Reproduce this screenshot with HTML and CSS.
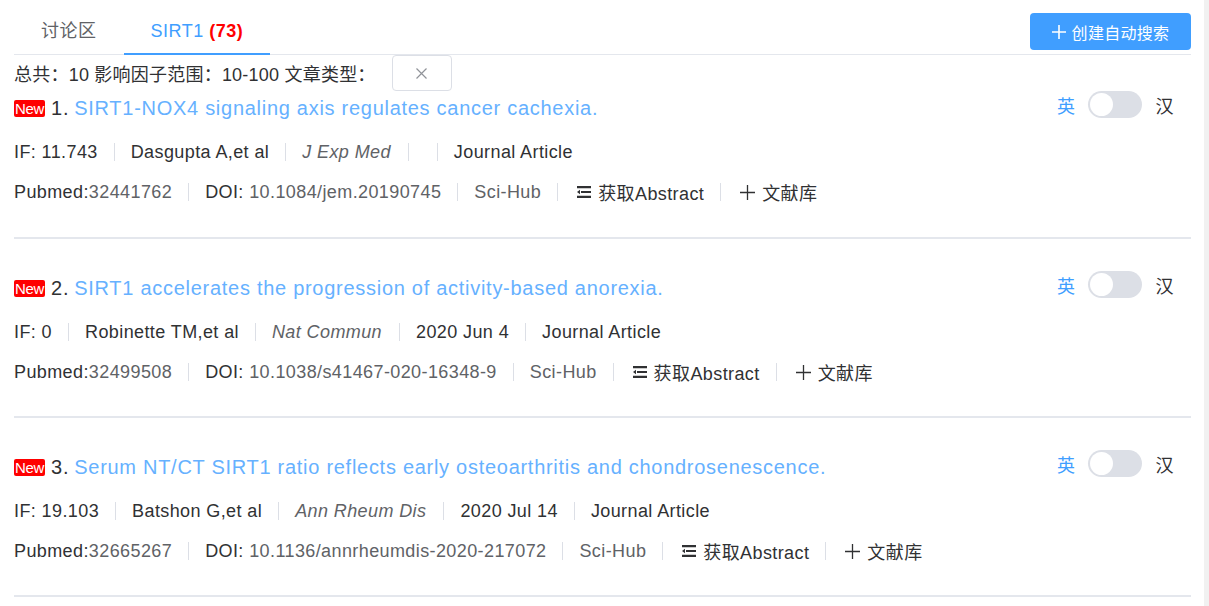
FILE: index.html
```html
<!DOCTYPE html>
<html lang="zh-CN">
<head>
    <meta charset="UTF-8">
    <meta name="viewport" content="width=device-width, initial-scale=1.0">
    <title>SIRT1 文献</title>
    <link rel="stylesheet" href="styles.css">
</head>
<body>
    <div class="page">
        <div class="header">
            <div class="tabs">
                <div class="tab">讨论区</div>
                <div class="tab active">SIRT1 <b class="count">(73)</b></div>
            </div>
            <button class="create-btn">
                <svg width="14" height="14" viewBox="0 0 14 14"><path d="M7 0v14M0 7h14" stroke="#fff" stroke-width="1.6"/></svg>
                创建自动搜索
            </button>
        </div>

        <div class="filter-row">
            <span class="filter-text">总共：10 影响因子范围：10-100 文章类型：</span>
            <span class="filter-box">
                <svg width="11" height="11" viewBox="0 0 11 11"><path d="M0.5 0.5l10 10M10.5 0.5l-10 10" stroke="#909399" stroke-width="1.2"/></svg>
            </span>
        </div>

        <div class="article first">
            <div class="title-row">
                <div class="title"><span class="badge">New</span><span class="num">1.</span><a class="title-link">SIRT1-NOX4 signaling axis regulates cancer cachexia.</a></div>
                <div class="lang-switch"><span class="lang-en">英</span><span class="toggle"><span class="knob"></span></span><span class="lang-zh">汉</span></div>
            </div>
            <div class="meta">
                <span>IF: 11.743</span><i class="sep"></i>
                <span>Dasgupta A,et al</span><i class="sep"></i>
                <span class="journal">J Exp Med</span><i class="sep"></i>
                <span class="empty"></span><i class="sep"></i>
                <span>Journal Article</span>
            </div>
            <div class="meta">
                <span>Pubmed:<span class="muted">32441762</span></span><i class="sep"></i>
                <span>DOI: <span class="muted">10.1084/jem.20190745</span></span><i class="sep"></i>
                <span class="muted">Sci-Hub</span><i class="sep"></i>
                <span class="action"><svg class="ico" width="14" height="12" viewBox="0 0 14 12"><path d="M0 0h14v2.2H0zM4 4.9h10v2.2H4zM0 9.8h14V12H0zM0 6l3-2.2v4.4z" fill="#303133"/></svg>获取Abstract</span><i class="sep"></i>
                <span class="action"><svg class="ico" width="15" height="15" viewBox="0 0 15 15"><path d="M7.5 0v15M0 7.5h15" stroke="#303133" stroke-width="1.3"/></svg>文献库</span>
            </div>
        </div>

        <div class="article">
            <div class="title-row">
                <div class="title"><span class="badge">New</span><span class="num">2.</span><a class="title-link">SIRT1 accelerates the progression of activity-based anorexia.</a></div>
                <div class="lang-switch"><span class="lang-en">英</span><span class="toggle"><span class="knob"></span></span><span class="lang-zh">汉</span></div>
            </div>
            <div class="meta">
                <span>IF: 0</span><i class="sep"></i>
                <span>Robinette TM,et al</span><i class="sep"></i>
                <span class="journal">Nat Commun</span><i class="sep"></i>
                <span>2020 Jun 4</span><i class="sep"></i>
                <span>Journal Article</span>
            </div>
            <div class="meta">
                <span>Pubmed:<span class="muted">32499508</span></span><i class="sep"></i>
                <span>DOI: <span class="muted">10.1038/s41467-020-16348-9</span></span><i class="sep"></i>
                <span class="muted">Sci-Hub</span><i class="sep"></i>
                <span class="action"><svg class="ico" width="14" height="12" viewBox="0 0 14 12"><path d="M0 0h14v2.2H0zM4 4.9h10v2.2H4zM0 9.8h14V12H0zM0 6l3-2.2v4.4z" fill="#303133"/></svg>获取Abstract</span><i class="sep"></i>
                <span class="action"><svg class="ico" width="15" height="15" viewBox="0 0 15 15"><path d="M7.5 0v15M0 7.5h15" stroke="#303133" stroke-width="1.3"/></svg>文献库</span>
            </div>
        </div>

        <div class="article">
            <div class="title-row">
                <div class="title"><span class="badge">New</span><span class="num">3.</span><a class="title-link">Serum NT/CT SIRT1 ratio reflects early osteoarthritis and chondrosenescence.</a></div>
                <div class="lang-switch"><span class="lang-en">英</span><span class="toggle"><span class="knob"></span></span><span class="lang-zh">汉</span></div>
            </div>
            <div class="meta">
                <span>IF: 19.103</span><i class="sep"></i>
                <span>Batshon G,et al</span><i class="sep"></i>
                <span class="journal">Ann Rheum Dis</span><i class="sep"></i>
                <span>2020 Jul 14</span><i class="sep"></i>
                <span>Journal Article</span>
            </div>
            <div class="meta">
                <span>Pubmed:<span class="muted">32665267</span></span><i class="sep"></i>
                <span>DOI: <span class="muted">10.1136/annrheumdis-2020-217072</span></span><i class="sep"></i>
                <span class="muted">Sci-Hub</span><i class="sep"></i>
                <span class="action"><svg class="ico" width="14" height="12" viewBox="0 0 14 12"><path d="M0 0h14v2.2H0zM4 4.9h10v2.2H4zM0 9.8h14V12H0zM0 6l3-2.2v4.4z" fill="#303133"/></svg>获取Abstract</span><i class="sep"></i>
                <span class="action"><svg class="ico" width="15" height="15" viewBox="0 0 15 15"><path d="M7.5 0v15M0 7.5h15" stroke="#303133" stroke-width="1.3"/></svg>文献库</span>
            </div>
        </div>
    </div>
    <div class="scroll-track"></div>
</body>
</html>
```

FILE: styles.css
```css
html, body {
    height: 100%;
}

body {
    margin: 0;
    display: flex;
    overflow: hidden;
    font-family: "Liberation Sans", "Noto Sans CJK SC", sans-serif;
    color: #303133;
    background: #fff;
}

.page {
    flex: 1;
    padding: 0 13px 0 14px;
    min-width: 0;
}

.scroll-track {
    width: 5px;
    background: #f1f1f1;
}

.header {
    display: flex;
    justify-content: space-between;
    align-items: flex-start;
    height: 54px;
    border-bottom: 1px solid #e4e7ed;
}

.tabs {
    display: flex;
}

.tab {
    height: 55px;
    box-sizing: border-box;
    padding: 10px 27px 0;
    line-height: 42px;
    font-size: 18px;
    letter-spacing: 0.5px;
    color: #606266;
    border-bottom: 2px solid transparent;
    margin-bottom: -1px;
}

.tab.active {
    color: #409eff;
    border-bottom-color: #409eff;
}

.count {
    color: #f00;
}

.create-btn {
    margin-top: 13px;
    width: 161px;
    height: 37px;
    display: flex;
    align-items: center;
    justify-content: center;
    gap: 6px;
    background: #409eff;
    color: #fff;
    border: none;
    border-radius: 4px;
    font-family: inherit;
    font-size: 16px;
    letter-spacing: 0.3px;
    cursor: pointer;
}

.filter-row {
    display: flex;
    align-items: flex-start;
    height: 37px;
    font-size: 18px;
}

.filter-text {
    padding-top: 2px;
    line-height: 36px;
    letter-spacing: 0.22px;
}

.filter-box {
    margin-left: 16px;
    width: 60px;
    height: 36px;
    box-sizing: border-box;
    border: 1px solid #dcdfe6;
    border-radius: 4px;
    display: flex;
    align-items: center;
    justify-content: center;
}

.article {
    padding: 33px 0 24px;
    border-bottom: 2px solid #e4e7ed;
}

.article.first {
    padding-top: 0;
    padding-bottom: 25px;
}

.title-row {
    display: flex;
    justify-content: space-between;
    align-items: center;
    height: 32px;
    margin-bottom: 8px;
}

.title {
    display: flex;
    align-items: center;
    font-size: 20px;
    letter-spacing: 0.72px;
    white-space: nowrap;
}

.badge {
    background: #f00;
    color: #fff;
    font-size: 15px;
    line-height: 17px;
    height: 17px;
    padding: 0 1px;
    border-radius: 2px;
    margin-right: 6px;
    letter-spacing: -0.3px;
}

.num {
    margin-right: 5px;
}

.title-link {
    color: #66b1ff;
    cursor: pointer;
}

.lang-switch {
    display: flex;
    align-items: center;
    margin-right: 17px;
    margin-top: -7px;
    font-size: 18px;
    letter-spacing: 0.5px;
}

.lang-en {
    color: #409eff;
}

.toggle {
    margin: 0 14px 0 12px;
    width: 54px;
    height: 27px;
    border-radius: 14px;
    background: #dcdfe6;
    display: flex;
    align-items: center;
    padding-left: 2px;
    box-sizing: border-box;
}

.knob {
    width: 23px;
    height: 23px;
    border-radius: 50%;
    background: #fff;
}

.meta {
    display: flex;
    align-items: center;
    height: 40px;
    font-size: 18px;
    letter-spacing: 0.4px;
    white-space: nowrap;
}

.sep {
    width: 1px;
    height: 18px;
    background: #dcdfe6;
    margin: 0 16px;
}

.empty {
    margin: 0 -2px;
}

.journal {
    font-style: italic;
    color: #606266;
    padding-right: 1px;
}

.muted {
    color: #606266;
}

.action {
    display: flex;
    align-items: center;
}

.ico {
    margin: 0 7px 0 3px;
}
```
